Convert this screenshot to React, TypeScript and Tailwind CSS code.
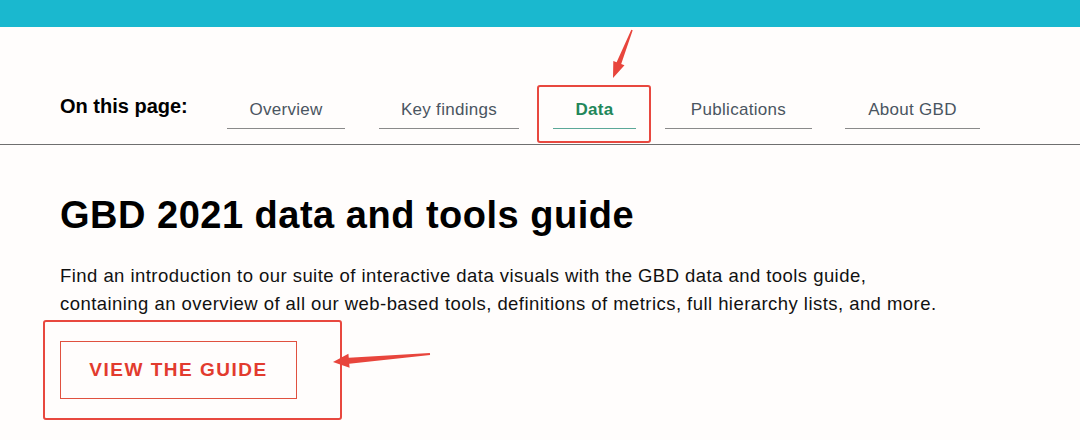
import React from "react";

const navItems = [
  { label: "Overview", cls: "w-[118px] ml-[41px]", active: false },
  { label: "Key findings", cls: "w-[140px] ml-[34px]", active: false },
  { label: "Data", cls: "w-[83px] ml-[34px]", active: true },
  { label: "Publications", cls: "w-[147px] ml-[29px]", active: false },
  { label: "About GBD", cls: "w-[135px] ml-[33px]", active: false },
];

export default function App() {
  return (
    <div
      className="relative w-[1080px] h-[440px] overflow-hidden bg-[#fffdfc] text-black"
      style={{ fontFamily: '"Liberation Sans", Arial, sans-serif' }}
    >
      {/* brand strip */}
      <div className="h-[27px] bg-[#1ab8cf]" />

      {/* in-page navigation */}
      <div className="pt-[67px] pb-[15px] border-b border-[#6f6f6f]">
        <div className="flex items-start px-[60px]">
          <span className="shrink-0 w-[126px] whitespace-nowrap text-[20px] leading-[24px] font-bold">On this page:</span>
          <ul className="flex mt-[4px]">
            {navItems.map((it) => (
              <li
                key={it.label}
                className={
                  it.active
                    ? it.cls + " shrink-0 whitespace-nowrap text-center text-[17px] leading-[24px] tracking-[0.3px] pb-[6px] border-b border-[#5ba898] font-bold text-[#22875a]"
                    : it.cls + " shrink-0 whitespace-nowrap text-center text-[17px] leading-[24px] tracking-[0.3px] pb-[6px] border-b border-[#8a8a8a] text-[#4a5561]"
                }
              >
                {it.label}
              </li>
            ))}
          </ul>
        </div>
      </div>

      {/* content */}
      <div className="px-[60px]">
        <h1 className="mt-[48px] text-[38px] leading-[44px] font-bold tracking-[0.5px]">
          GBD 2021 data and tools guide
        </h1>
        <p className="mt-[25px] text-[18.5px] leading-[28px] tracking-[0.45px] text-[#111] whitespace-nowrap">
          Find an introduction to our suite of interactive data visuals with the GBD data and tools guide,
          <br />
          containing an overview of all our web-based tools, definitions of metrics, full hierarchy lists, and more.
        </p>
        <button className="mt-[23px] w-[237px] h-[58px] flex items-center justify-center border border-[#e0513f] text-[#e23b2e] text-[19px] font-bold tracking-[1.5px]">
          VIEW THE GUIDE
        </button>
      </div>

      {/* highlight frames */}
      <div className="absolute left-[537px] top-[85px] w-[114px] h-[58px] border-2 border-[#e8483f] rounded-[3px] pointer-events-none" />
      <div className="absolute left-[43px] top-[320px] w-[299px] h-[100px] border-2 border-[#e8483f] rounded-[3px] pointer-events-none" />

      {/* pointer arrows */}
      <svg className="absolute left-0 top-0 pointer-events-none" width="1080" height="440" viewBox="0 0 1080 440">
        <polygon
          fill="#e8453c"
          points="632.7,30.3 621.2,64 624.5,65.3 613,78 613.3,60.9 616.6,62.2 631.3,29.7"
        />
        <polygon
          fill="#e8453c"
          points="430.1,355 349.2,363.7 349.6,367.7 333,362 348.4,353.7 348.8,357.7 429.9,353"
        />
      </svg>
    </div>
  );
}
